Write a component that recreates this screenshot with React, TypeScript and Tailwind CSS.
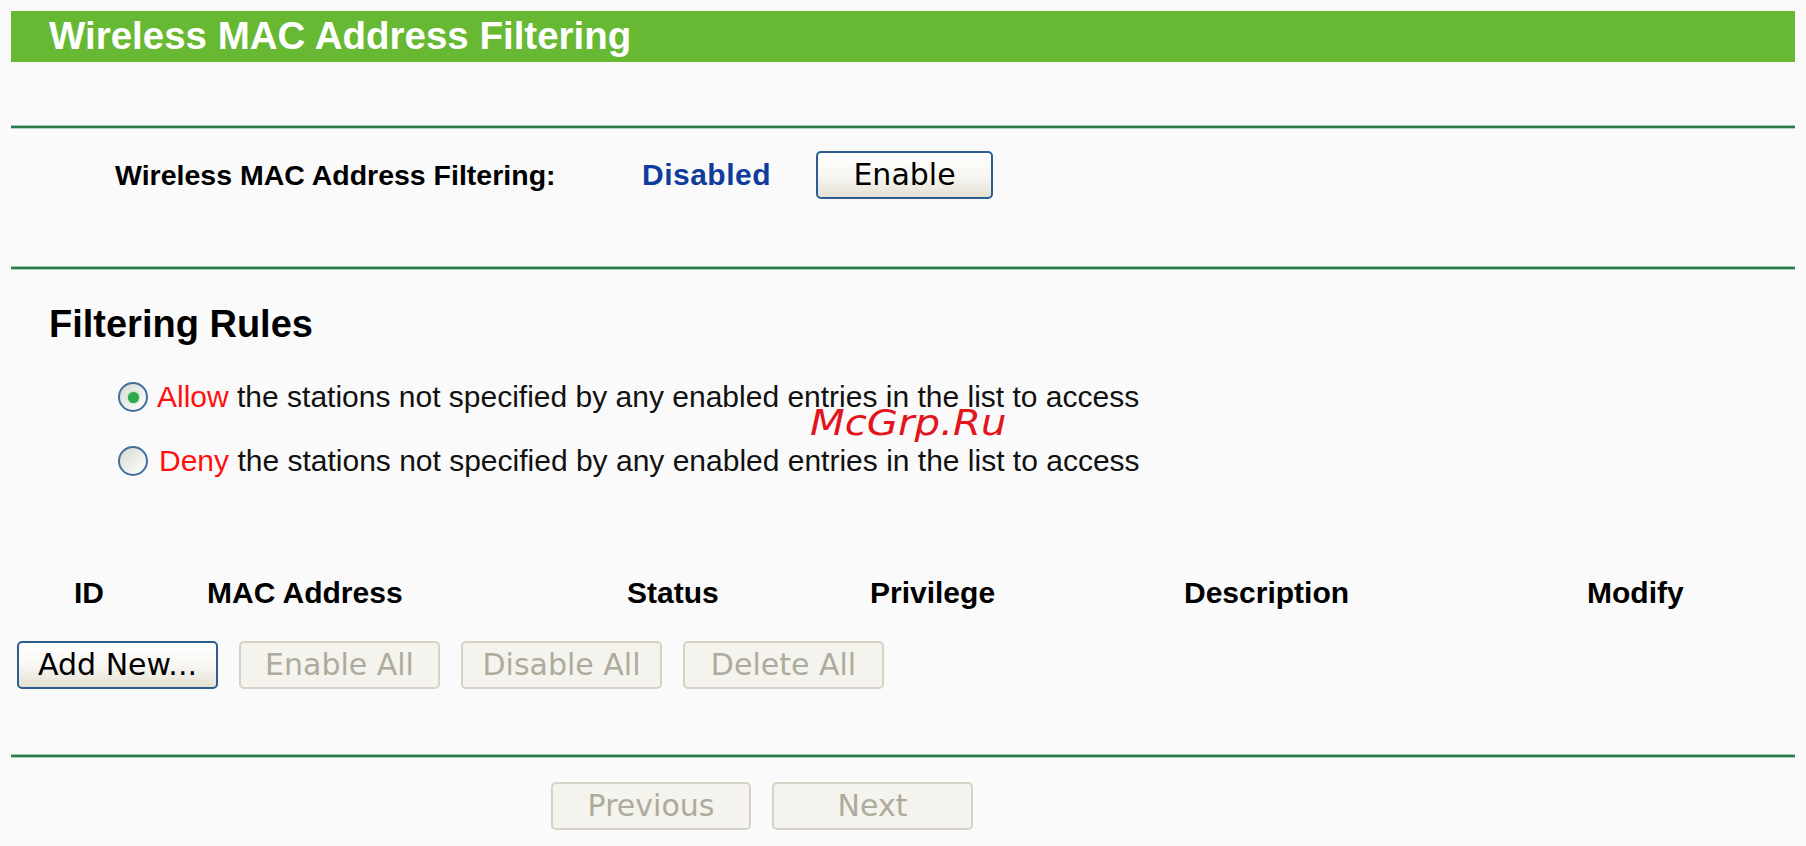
import React from "react";

const font = { fontFamily: '"Liberation Sans", Arial, sans-serif' };
const btnFont = { fontFamily: '"DejaVu Sans", "Liberation Sans", sans-serif' };

function Rule() {
  return (
    <div className="flex flex-col">
      <div className="h-[1px] bg-[#9fc8ad]" />
      <div className="h-[2px] bg-[#2b7a4c]" />
      <div className="h-[1px] bg-[#b3d5be]" />
    </div>
  );
}

function Btn({ label, enabled, w }: { label: string; enabled?: boolean; w: string }) {
  if (enabled) {
    return (
      <button
        style={btnFont}
        className={`${w} h-[48px] rounded-[5px] border-2 border-[#2c5d90] bg-linear-to-b from-[#ffffff] via-[#f8f7f3] to-[#e4e1d4] text-[30px] leading-none text-black flex items-center justify-center`}
      >
        {label}
      </button>
    );
  }
  return (
    <button
      style={btnFont}
      className={`${w} h-[48px] rounded-[5px] border-2 border-[#d6d3c6] bg-[#f4f3ed] text-[30px] leading-none text-[#aeab9d] flex items-center justify-center`}
    >
      {label}
    </button>
  );
}

function Radio({ checked }: { checked?: boolean }) {
  return (
    <div className="w-[30px] h-[30px] rounded-full border-2 border-[#3f6f9c] bg-linear-to-br from-[#d9d9d2] to-[#ffffff] flex items-center justify-center shrink-0">
      {checked && <div className="w-[11px] h-[11px] rounded-full bg-[#2ea84a] shadow-[0_0_2px_#5fd07a]" />}
    </div>
  );
}

export default function App() {
  return (
    <div className="relative min-h-[846px] w-full bg-[#fafafa] pt-[11px] px-[11px]" style={font}>
      <div className="h-[51px] bg-[#67b934] flex items-center pl-[38px]">
        <span className="text-[38.5px] leading-none font-bold text-white">Wireless MAC Address Filtering</span>
      </div>

      <div className="mt-[63px]">
        <Rule />
      </div>

      <div className="mt-[22px] h-[48px] flex items-center pl-[104px]">
        <span className="w-[527px] text-[28.5px] leading-none font-bold text-black">Wireless MAC Address Filtering:</span>
        <span className="w-[174px] text-[30px] leading-none font-bold text-[#103c9c] tracking-[0.5px]">Disabled</span>
        <Btn label="Enable" enabled w="w-[177px]" />
      </div>

      <div className="mt-[67px]">
        <Rule />
      </div>

      <div className="mt-[35px] pl-[38px] h-[37px] flex items-center">
        <span className="text-[38px] leading-none font-bold text-black">Filtering Rules</span>
      </div>

      <div className="mt-[35px] pl-[107px] flex flex-col gap-[24px]">
        <div className="h-[40px] flex items-center gap-[9px]">
          <Radio checked />
          <span className="text-[30px] leading-none text-[#111]">
            <span className="text-[#ff1010]">Allow</span> the stations not specified by any enabled entries in the list to access
          </span>
        </div>
        <div className="h-[40px] flex items-center gap-[11px]">
          <Radio />
          <span className="text-[30px] leading-none text-[#111]">
            <span className="text-[#ff1010]">Deny</span> the stations not specified by any enabled entries in the list to access
          </span>
        </div>
      </div>

      <div className="mt-[97px] h-[29px] pl-[63px] grid grid-cols-[133px_420px_243px_314px_403px_auto] items-center text-[30px] leading-none font-bold text-black">
        <span>ID</span>
        <span>MAC Address</span>
        <span>Status</span>
        <span>Privilege</span>
        <span>Description</span>
        <span>Modify</span>
      </div>

      <div className="mt-[34px] pl-[6px] flex gap-[21px]">
        <Btn label="Add New..." enabled w="w-[201px]" />
        <Btn label="Enable All" w="w-[201px]" />
        <Btn label="Disable All" w="w-[201px]" />
        <Btn label="Delete All" w="w-[201px]" />
      </div>

      <div className="mt-[65px]">
        <Rule />
      </div>

      <div className="mt-[24px] pl-[540px] flex gap-[21px]">
        <Btn label="Previous" w="w-[200px]" />
        <Btn label="Next" w="w-[201px]" />
      </div>

      <div
        className="absolute left-[810px] top-[406px] text-[35px] leading-none italic text-[#e3141c] scale-x-[1.15] origin-left"
        style={{ fontFamily: '"DejaVu Sans", sans-serif' }}
      >
        McGrp.Ru
      </div>
    </div>
  );
}
